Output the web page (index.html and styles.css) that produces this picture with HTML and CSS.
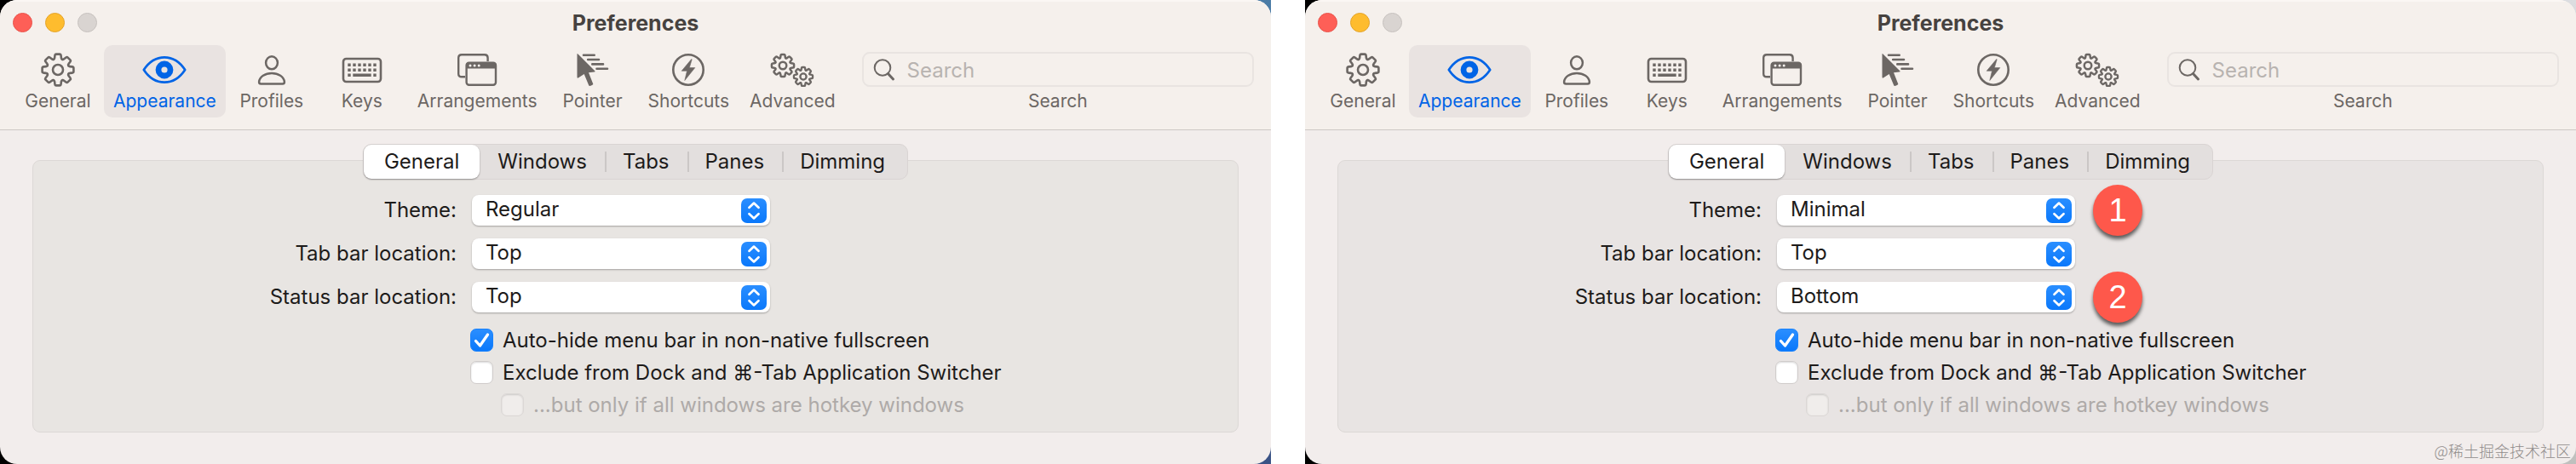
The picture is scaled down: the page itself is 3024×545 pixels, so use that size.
FILE: index.html
```
<!DOCTYPE html>
<html lang="en">
<head>
<meta charset="utf-8">
<meta name="viewport" content="width=device-width, initial-scale=1.0">
<title>Preferences</title>
<link rel="stylesheet" href="styles.css">
</head>
<body>
<!-- shared icons -->
<svg class="sprite" aria-hidden="true">
  <defs>
    <path id="tooth" d="M-5.05 -12.2Q-4 -12.7 -3.9 -14L-3.6 -16.6Q-3.4 -18.4 -2 -18.4H2Q3.4 -18.4 3.6 -16.6L3.9 -14Q4 -12.7 5.05 -12.2"/>
    <g id="gear">
      <use href="#tooth"/>
      <use href="#tooth" transform="rotate(45)"/>
      <use href="#tooth" transform="rotate(90)"/>
      <use href="#tooth" transform="rotate(135)"/>
      <use href="#tooth" transform="rotate(180)"/>
      <use href="#tooth" transform="rotate(225)"/>
      <use href="#tooth" transform="rotate(270)"/>
      <use href="#tooth" transform="rotate(315)"/>
      <circle r="6"/>
    </g>
  </defs>
  <symbol id="i-general" viewBox="-26 -20 52 40">
    <use href="#gear" fill="none" stroke="currentColor" stroke-width="2.6" stroke-linecap="round"/>
  </symbol>
  <symbol id="i-appearance" viewBox="-26 -20 52 40">
    <path d="M-24.2 0C-18 -9.500 -9.500 -14.700 0 -14.700S18 -9.500 24.200 0C18 9.500 9.500 14.700 0 14.700S-18 9.500 -24.200 0Z" fill="none" stroke="currentColor" stroke-width="2.700" stroke-linejoin="round"/>
    <circle r="7" fill="none" stroke="currentColor" stroke-width="6.800"/>
  </symbol>
  <symbol id="i-profiles" viewBox="-26 -20 52 40">
    <g fill="none" stroke="currentColor" stroke-width="2.500" stroke-linejoin="round">
      <ellipse cy="-8.200" rx="6.900" ry="7.500"/>
      <path d="M-14.900 14.200C-14.300 8 -7.600 4 0 4S14.300 8 14.900 14.200Q14.900 16.500 12.700 16.500H-12.700Q-14.900 16.500 -14.900 14.200Z"/>
    </g>
  </symbol>
  <symbol id="i-keys" viewBox="-26 -20 52 40">
    <rect x="-22" y="-13" width="44" height="27" rx="3.500" fill="none" stroke="currentColor" stroke-width="2.600"/>
    <g fill="none" stroke="currentColor" stroke-width="3.400">
      <path d="M-16.700 -5.700H17" stroke-dasharray="3.400 2.600"/>
      <path d="M-16.700 .3H17" stroke-dasharray="3.400 2.600"/>
      <path d="M-16.700 6.300h3.400M-10.700 6.300H10.700M13.300 6.300h3.400"/>
    </g>
  </symbol>
  <symbol id="i-arrangements" viewBox="-26 -20 52 40">
    <g fill="none" stroke="currentColor" stroke-width="2.400">
      <path d="M-14 8.300H-18Q-21.800 8.300 -21.800 4.700V-14Q-21.800 -17.700 -18 -17.700H9Q12.600 -17.700 12.600 -14V-10"/>
      <rect x="-12.400" y="-8.300" width="34.400" height="26" rx="3"/>
    </g>
    <path d="M-13 -1.500V-6Q-12.500 -9 -9.500 -9H19Q22.500 -9 22.800 -6V-1.500Z" fill="currentColor"/>
    <g fill="#f5f0ec"><circle cx="-8" cy="-4.900" r="1.500"/><circle cx="-2.900" cy="-4.900" r="1.500"/><circle cx="2.200" cy="-4.900" r="1.500"/></g>
  </symbol>
  <symbol id="i-pointer" viewBox="-26 -20 52 40">
    <path d="M-18.500 -18.200Q-18.500 -19.600 -17.500 -18.600L2.500 1.500Q3 2.400 1.500 2.500L-5 3.300L.3 16.700Q.4 17.800 -3.800 18.900Q-4.400 19 -4.800 18.200L-10.300 5L-17.300 9.500Q-18.500 10 -18.500 8.500Z" fill="currentColor"/>
    <path d="M-11 -17.200H1.700M-5.800 -12H7M-.7 -6.600H12M4.500 -1.300H17" fill="none" stroke="currentColor" stroke-width="2.600" stroke-linecap="round"/>
  </symbol>
  <symbol id="i-shortcuts" viewBox="-26 -20 52 40">
    <circle r="17.700" fill="none" stroke="currentColor" stroke-width="2.600"/>
    <path d="M3.700 -12.500L-7.800 1.300H-1.500L-4.200 12.500L7.800 -2.400H1.300L4.200 -12.200Z" fill="currentColor" stroke="currentColor" stroke-width=".6" stroke-linejoin="round"/>
  </symbol>
  <symbol id="i-advanced" viewBox="-26 -20 52 40">
    <g fill="none" stroke="currentColor" stroke-linecap="round">
      <use href="#gear" transform="translate(-11 -5) scale(.71)" stroke-width="3.500"/>
      <use href="#gear" transform="translate(13 8) scale(.6)" stroke-width="3.900"/>
    </g>
  </symbol>
  <symbol id="i-search" viewBox="0 0 26 28">
    <circle cx="11" cy="11.500" r="9.300" fill="none" stroke="currentColor" stroke-width="2"/>
    <path d="M17.500 18.500L23.500 25" stroke="currentColor" stroke-width="3" stroke-linecap="round"/>
  </symbol>
  <symbol id="i-arrows" viewBox="0 0 30 29">
    <path d="M9.500 10.800L15 5.600L20.500 10.800M9.500 18.200L15 23.400L20.500 18.200" fill="none" stroke="#fff" stroke-width="2.700" stroke-linecap="round" stroke-linejoin="round"/>
  </symbol>
  <symbol id="i-check" viewBox="0 0 27 27">
    <path d="M6.500 14.500L11.500 20L20.500 7" fill="none" stroke="#fff" stroke-width="3.300" stroke-linecap="round" stroke-linejoin="round"/>
  </symbol>
</svg>

<div class="desktop">
  <section class="window">
    <header class="header">
      <div class="titlebar">
        <div class="lights">
          <button type="button" class="light red" aria-label="Close"></button>
          <button type="button" class="light yellow" aria-label="Minimize"></button>
          <button type="button" class="light gray" aria-label="Zoom" disabled></button>
        </div>
        <h1>Preferences</h1>
      </div>
      <nav class="toolbar">
        <button type="button" class="tool"><svg><use href="#i-general"/></svg>General</button>
        <button type="button" class="tool active"><svg><use href="#i-appearance"/></svg>Appearance</button>
        <button type="button" class="tool"><svg><use href="#i-profiles"/></svg>Profiles</button>
        <button type="button" class="tool"><svg><use href="#i-keys"/></svg>Keys</button>
        <button type="button" class="tool"><svg><use href="#i-arrangements"/></svg>Arrangements</button>
        <button type="button" class="tool"><svg><use href="#i-pointer"/></svg>Pointer</button>
        <button type="button" class="tool"><svg><use href="#i-shortcuts"/></svg>Shortcuts</button>
        <button type="button" class="tool"><svg><use href="#i-advanced"/></svg>Advanced</button>
        <div class="search">
          <div class="search-box">
            <svg><use href="#i-search"/></svg>
            <input type="text" id="search1" placeholder="Search">
          </div>
          <label for="search1">Search</label>
        </div>
      </nav>
    </header>
    <main class="content">
      <div class="tabs">
        <button type="button" class="tab selected">General</button>
        <button type="button" class="tab">Windows</button>
        <button type="button" class="tab">Tabs</button>
        <button type="button" class="tab">Panes</button>
        <button type="button" class="tab">Dimming</button>
      </div>
      <form class="panel">
        <div class="row">
          <label for="theme1">Theme:</label>
          <div class="select">
            <select id="theme1"><option>Regular</option><option>Minimal</option></select>
            <svg><use href="#i-arrows"/></svg>
          </div>
        </div>
        <div class="row">
          <label for="tabbar1">Tab bar location:</label>
          <div class="select">
            <select id="tabbar1"><option>Top</option><option>Bottom</option></select>
            <svg><use href="#i-arrows"/></svg>
          </div>
        </div>
        <div class="row">
          <label for="status1">Status bar location:</label>
          <div class="select">
            <select id="status1"><option>Top</option><option>Bottom</option></select>
            <svg><use href="#i-arrows"/></svg>
          </div>
        </div>
        <div class="checks">
          <label class="check"><span class="box"><input type="checkbox" checked><svg><use href="#i-check"/></svg></span>Auto-hide menu bar in non-native fullscreen</label>
          <label class="check"><span class="box"><input type="checkbox"></span>Exclude from Dock and ⌘-Tab Application Switcher</label>
          <label class="check sub"><span class="box"><input type="checkbox" disabled></span>...but only if all windows are hotkey windows</label>
        </div>
      </form>
    </main>
  </section>
</div>

<div class="desktop second">
  <section class="window">
    <header class="header">
      <div class="titlebar">
        <div class="lights">
          <button type="button" class="light red" aria-label="Close"></button>
          <button type="button" class="light yellow" aria-label="Minimize"></button>
          <button type="button" class="light gray" aria-label="Zoom" disabled></button>
        </div>
        <h1>Preferences</h1>
      </div>
      <nav class="toolbar">
        <button type="button" class="tool"><svg><use href="#i-general"/></svg>General</button>
        <button type="button" class="tool active"><svg><use href="#i-appearance"/></svg>Appearance</button>
        <button type="button" class="tool"><svg><use href="#i-profiles"/></svg>Profiles</button>
        <button type="button" class="tool"><svg><use href="#i-keys"/></svg>Keys</button>
        <button type="button" class="tool"><svg><use href="#i-arrangements"/></svg>Arrangements</button>
        <button type="button" class="tool"><svg><use href="#i-pointer"/></svg>Pointer</button>
        <button type="button" class="tool"><svg><use href="#i-shortcuts"/></svg>Shortcuts</button>
        <button type="button" class="tool"><svg><use href="#i-advanced"/></svg>Advanced</button>
        <div class="search">
          <div class="search-box">
            <svg><use href="#i-search"/></svg>
            <input type="text" id="search2" placeholder="Search">
          </div>
          <label for="search2">Search</label>
        </div>
      </nav>
    </header>
    <main class="content">
      <div class="tabs">
        <button type="button" class="tab selected">General</button>
        <button type="button" class="tab">Windows</button>
        <button type="button" class="tab">Tabs</button>
        <button type="button" class="tab">Panes</button>
        <button type="button" class="tab">Dimming</button>
      </div>
      <form class="panel">
        <div class="row">
          <label for="theme2">Theme:</label>
          <div class="select">
            <select id="theme2"><option>Regular</option><option selected>Minimal</option></select>
            <svg><use href="#i-arrows"/></svg>
            <span class="badge">1</span>
          </div>
        </div>
        <div class="row">
          <label for="tabbar2">Tab bar location:</label>
          <div class="select">
            <select id="tabbar2"><option>Top</option><option>Bottom</option></select>
            <svg><use href="#i-arrows"/></svg>
          </div>
        </div>
        <div class="row">
          <label for="status2">Status bar location:</label>
          <div class="select">
            <select id="status2"><option>Top</option><option selected>Bottom</option></select>
            <svg><use href="#i-arrows"/></svg>
            <span class="badge">2</span>
          </div>
        </div>
        <div class="checks">
          <label class="check"><span class="box"><input type="checkbox" checked><svg><use href="#i-check"/></svg></span>Auto-hide menu bar in non-native fullscreen</label>
          <label class="check"><span class="box"><input type="checkbox"></span>Exclude from Dock and ⌘-Tab Application Switcher</label>
          <label class="check sub"><span class="box"><input type="checkbox" disabled></span>...but only if all windows are hotkey windows</label>
        </div>
      </form>
    </main>
  </section>
  <span class="watermark">@稀土掘金技术社区</span>
</div>
</body>
</html>
```
FILE: styles.css
```
* {
  box-sizing: border-box;
}
body {
  margin: 0;
  display: flex;
  gap: 40px;
  background: #fff;
  color: #1d1b1a;
  font-family: Inter, "Liberation Sans", sans-serif;
  font-size: 24px;
  line-height: 28px;
}
button,input,select {
  margin: 0;
  padding: 0;
  border: 0;
  background: none;
  color: inherit;
  font: inherit;
}
.sprite {
  position: absolute;
  width: 0;
  height: 0;
}
/* the wallpaper shows behind the window corners */
.desktop {
  position: relative;
  flex: 1;
  min-width: 0;
  background: linear-gradient(to right, #000 50%, transparent 50%), linear-gradient(#4b7ca6, #3a5285);
}
.second {
  background: linear-gradient(to right, #000 50%, transparent 50%), linear-gradient(#dcdde0, #bfc0be);
}
.window {
  border-radius: 20px;
  overflow: hidden;
  background: #f2edec;
}
.header {
  padding-bottom: 14px;
  background: #f5f0ec;
  border-top: 2px solid #fbf7f4;
  border-bottom: 1px solid #cdc8c5;
}
.titlebar {
  display: grid;
  grid-template-columns: 1fr auto 1fr;
  align-items: center;
  height: 51px;
  padding: 0 15px 2px;
}
.lights {
  display: flex;
  gap: 15px;
}
.light {
  width: 23px;
  height: 23px;
  border-radius: 50%;
  border: 1px solid #e8544c;
  background: #fe5f57;
}
.yellow {
  border-color: #e3a32a;
  background: #febc2e;
}
.gray {
  border-color: #c6c1be;
  background: #d9d4d1;
}
h1 {
  margin: 0;
  color: #464240;
  font-size: 25px;
  line-height: 28px;
  font-weight: 700;
}
.toolbar {
  display: flex;
  gap: 2px;
  padding: 0 20px 0 16px;
  color: #6c6764;
  font-size: 21px;
  line-height: 24px;
}
.tool {
  display: flex;
  flex-direction: column;
  align-items: center;
  gap: 5px;
  min-width: 104px;
  height: 85px;
  padding: 9px 11px 0;
  border-radius: 10px;
}
.tool svg {
  width: 52px;
  height: 40px;
}
.active {
  background: #e9e3e1;
  color: #0064e6;
}
.search {
  flex: 1;
  min-width: 0;
  margin-left: 18px;
  padding-top: 8px;
  display: flex;
  flex-direction: column;
  gap: 5px;
  text-align: center;
}
.search-box {
  display: flex;
  align-items: center;
  gap: 14px;
  height: 41px;
  padding: 0 11px;
  border: 2px solid #e9e4e1;
  border-radius: 9px;
  font-size: 24px;
}
.search-box svg {
  width: 26px;
  height: 28px;
}
.search-box input {
  flex: 1;
  min-width: 0;
  padding-top: 2px;
  outline: none;
}
.search-box input::placeholder {
  color: #b8b3b0;
  opacity: 1;
}
.content {
  padding: 16px 38px 37px;
}
.tabs {
  position: relative;
  display: flex;
  width: max-content;
  height: 42px;
  margin: 0 auto -23px;
  border: 1px solid #d9d4d3;
  border-radius: 10px;
  background: #e3dfde;
}
.tab {
  position: relative;
  padding: 0 21px;
}
.tab + .tab + .tab {
  background: linear-gradient(#cbc7c6, #cbc7c6) left center / 2px 24px no-repeat;
}
.tab:last-child {
  padding-right: 26px;
}
.tab.selected {
  padding: 0 24px;
  border-radius: 9px;
  background: #fff;
  box-shadow: 0 1px 2px rgba(0,0,0,.35);
}
.panel {
  display: flex;
  flex-direction: column;
  gap: 15px;
  padding: 40px 0 18px;
  border: 1px solid #dcd8d6;
  border-radius: 9px;
  background: #e8e5e2;
}
.second .panel {
  background: #e8e4e3;
}
.row {
  display: grid;
  grid-template-columns: calc(50% - 210px) 350px;
  column-gap: 18px;
  align-items: center;
}
.row label {
  text-align: right;
  white-space: nowrap;
}
.select {
  position: relative;
  display: grid;
}
.select select {
  grid-area: 1 / 1;
  appearance: none;
  height: 36px;
  padding: 0 40px 2px 16px;
  border-radius: 8px;
  background: #fff;
  box-shadow: 0 1px 2px rgba(0,0,0,.3);
}
.select svg {
  grid-area: 1 / 1;
  place-self: center end;
  width: 30px;
  height: 29px;
  margin-right: 4px;
  border-radius: 7px;
  background: linear-gradient(#2a8eff, #0a78fb);
  pointer-events: none;
}
.badge {
  position: absolute;
  top: -12px;
  left: 371px;
  width: 58px;
  height: 60px;
  border-radius: 50%;
  background: #fe584b;
  box-shadow: 0 4px 4px rgba(0,0,0,.6);
  color: #fff;
  font: 38px/60px "Liberation Sans", sans-serif;
  text-align: center;
}
.checks {
  display: flex;
  flex-direction: column;
  gap: 11px;
  margin-left: calc(50% - 194px);
  padding-top: 4px;
}
.check {
  display: flex;
  align-items: center;
  gap: 11px;
  height: 27px;
  white-space: nowrap;
}
.sub {
  margin-left: 36px;
  color: #aeaaa8;
}
.box {
  display: grid;
}
.box input,.box svg {
  grid-area: 1 / 1;
  width: 27px;
  height: 27px;
}
.box svg {
  pointer-events: none;
}
.box input {
  appearance: none;
  border: 1px solid #d0cccb;
  border-radius: 7px;
  background: #fff;
  box-shadow: inset 0 1px 2px rgba(0,0,0,.15);
}
.box input:checked {
  border-color: #1a83fd;
  background: linear-gradient(#2a8eff, #0a78fb);
  box-shadow: none;
}
.box input:disabled {
  border-color: #dbd7d5;
  background: #f0edeb;
}
.watermark {
  position: absolute;
  right: 6px;
  bottom: 3px;
  color: #8f8b8a;
  font: 300 18px/26px "Noto Sans CJK SC", sans-serif;
}
```
